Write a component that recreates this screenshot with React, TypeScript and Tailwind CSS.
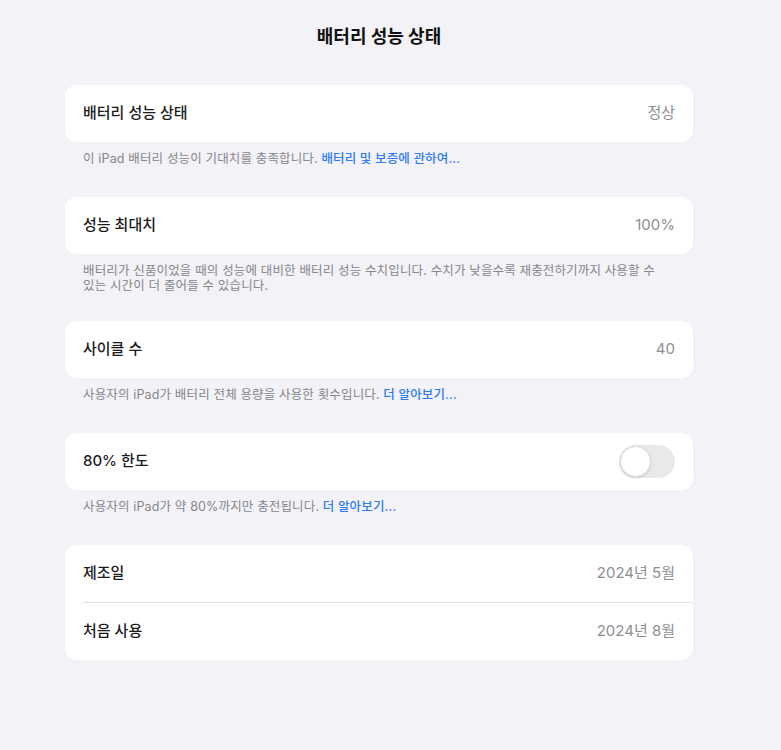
import React from "react";

const font = { fontFamily: 'Inter, "Noto Sans CJK KR", "Noto Sans", sans-serif' };

interface RowProps {
    label: string;
    value?: string;
    toggle?: boolean;
}

const Row: React.FC<RowProps> = ({ label, value, toggle }) => {
    return (
        <div className="flex items-center justify-between h-[57px] px-[18px]">
            <span className="text-[15px] font-medium text-[#1c1c1e]">{label}</span>
            {toggle ? (
                <div className="w-[56px] h-[33px] rounded-full bg-[#e9e9ec] p-[1px] flex items-center">
                    <div className="w-[31px] h-[31px] rounded-full bg-white border border-[#dedee2] shadow-sm" />
                </div>
            ) : (
                <span className="text-[15px] text-[#8e8e93]">{value}</span>
            )}
        </div>
    );
};

const Link: React.FC<{ children: React.ReactNode }> = ({ children }) => (
    <span className="text-[#2f7bf5] font-medium">{children}</span>
);

const note = "mt-[9px] px-[18px] text-[12.5px] tracking-[0.15px] leading-[15px] text-[#86868b]";

export default function App() {
    return (
        <div className="min-h-[750px] w-full bg-[#f2f2f7]" style={font}>
            <div className="w-[628px] ml-[65px] flex flex-col">
                <h1 className="mt-[26px] h-[22px] leading-[22px] text-[18px] font-bold text-[#111] text-center">배터리 성능 상태</h1>

                {/* 배터리 성능 상태 */}
                <div className="mt-[37px] bg-white rounded-[12px]">
                    <Row label="배터리 성능 상태" value="정상" />
                </div>
                <p className={`${note} mb-[31px]`}>
                    이 iPad 배터리 성능이 기대치를 충족합니다. <Link>배터리 및 보증에 관하여...</Link>
                </p>

                {/* 성능 최대치 */}
                <div className="bg-white rounded-[12px]">
                    <Row label="성능 최대치" value="100%" />
                </div>
                <p className={`${note} mb-[28px]`}>
                    배터리가 신품이었을 때의 성능에 대비한 배터리 성능 수치입니다. 수치가 낮을수록 재충전하기까지 사용할 수
                    <br />
                    있는 시간이 더 줄어들 수 있습니다.
                </p>

                {/* 사이클 수 */}
                <div className="bg-white rounded-[12px]">
                    <Row label="사이클 수" value="40" />
                </div>
                <p className={`${note} mb-[31px]`}>
                    사용자의 iPad가 배터리 전체 용량을 사용한 횟수입니다. <Link>더 알아보기...</Link>
                </p>

                {/* 80% 한도 */}
                <div className="bg-white rounded-[12px]">
                    <Row label="80% 한도" toggle />
                </div>
                <p className={`${note} mb-[31px]`}>
                    사용자의 iPad가 약 80%까지만 충전됩니다. <Link>더 알아보기...</Link>
                </p>

                {/* 제조일 / 처음 사용 */}
                <div className="bg-white rounded-[12px]">
                    <Row label="제조일" value="2024년 5월" />
                    <div className="ml-[18px] h-px bg-[#e3e3e6]" />
                    <Row label="처음 사용" value="2024년 8월" />
                </div>
            </div>
        </div>
    );
}
